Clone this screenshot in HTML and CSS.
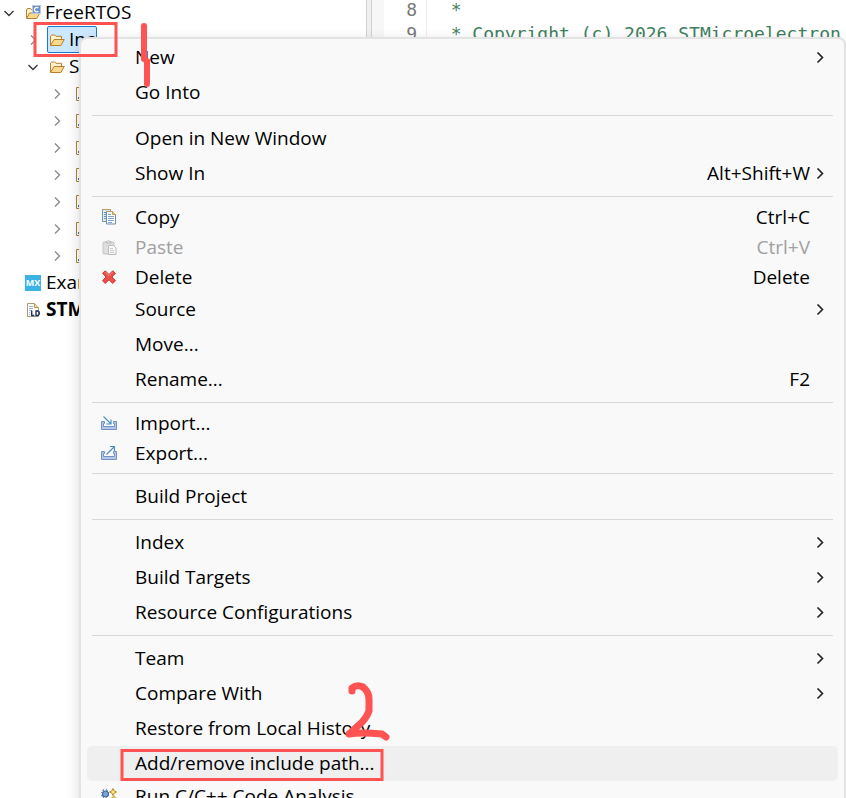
FILE: index.html
```html
<!DOCTYPE html>
<html lang="en">
<head>
<meta charset="utf-8">
<title>Project Explorer</title>
<link rel="stylesheet" href="styles.css">
</head>
<body>
<svg class="defs" aria-hidden="true">
  <symbol id="folder" viewBox="0 0 16 16">
    <path d="M1.500 13V4.200L2.800 3h3l1.200 1.300h5.500V7" fill="#fff3cf" stroke="#b9802f"/>
    <path d="M1.500 13.500 5 7.500h10.300l-3.400 6z" fill="#f9d98c" stroke="#b9802f" stroke-linejoin="round"/>
  </symbol>
  <symbol id="right" viewBox="0 0 12 12"><path d="M4 1.500 8.500 6 4 10.500" fill="none" stroke="currentColor" stroke-width="1.300"/></symbol>
  <symbol id="down" viewBox="0 0 12 12"><path d="M1.500 4 6 8.500 10.500 4" fill="none" stroke="currentColor" stroke-width="1.300"/></symbol>
  <symbol id="file" viewBox="0 0 16 16"><path d="M1.500 1.500h9l4 4v9h-13z" fill="#fffdf5" stroke="#a9853c"/><path d="M3 12h5" stroke="#3c74b8" stroke-width="2"/></symbol>
  <symbol id="more" viewBox="0 0 12 12"><path d="M3.500.500 8.500 5.500 3.500 10.500" fill="none" stroke="#222" stroke-width="1.600"/></symbol>
</svg>

<main class="workbench">
  <nav class="explorer" aria-label="Project Explorer">
    <ul class="tree">
      <li class="row root"><svg class="twisty"><use href="#down"/></svg>
        <svg class="icon" viewBox="0 0 16 16"><path d="M1.500 13V5l1-1.500h3L7 5h5v3" fill="#fff3cf" stroke="#b9802f"/><path d="M1.500 13.500 4.500 8h10.300l-3 5.500z" fill="#f9d98c" stroke="#b9802f"/><path d="M7.500.5h8v8h-8z" fill="#6d8fc9" stroke="#b8c9e8"/><path d="M13.300 3.200a2.200 2.200 0 1 0 0 2.800" fill="none" stroke="#fff" stroke-width="1.300"/></svg>
        <span class="name">FreeRTOS</span></li>
      <li class="row folder"><svg class="twisty pale"><use href="#right"/></svg><span class="selected"><svg class="icon"><use href="#folder"/></svg><span class="name">Inc</span></span></li>
      <li class="row folder"><svg class="twisty"><use href="#down"/></svg><svg class="icon"><use href="#folder"/></svg><span class="name">Src</span></li>
      <li class="row leaf"><svg class="twisty pale"><use href="#right"/></svg><svg class="icon"><use href="#file"/></svg></li>
      <li class="row leaf"><svg class="twisty pale"><use href="#right"/></svg><svg class="icon"><use href="#file"/></svg></li>
      <li class="row leaf"><svg class="twisty pale"><use href="#right"/></svg><svg class="icon"><use href="#file"/></svg></li>
      <li class="row leaf"><svg class="twisty pale"><use href="#right"/></svg><svg class="icon"><use href="#file"/></svg></li>
      <li class="row leaf"><svg class="twisty pale"><use href="#right"/></svg><svg class="icon"><use href="#file"/></svg></li>
      <li class="row leaf"><svg class="twisty pale"><use href="#right"/></svg><svg class="icon"><use href="#file"/></svg></li>
      <li class="row leaf"><svg class="twisty pale"><use href="#right"/></svg><svg class="icon"><use href="#file"/></svg></li>
      <li class="row file"><span class="icon mx">MX</span><span class="name">Example</span></li>
      <li class="row file"><svg class="icon" viewBox="0 0 16 16"><path d="M2.500 1.500h7l4 4v9h-11z" fill="#fffdf5" stroke="#a99b77"/><path d="M9.500 1.500v4h4" fill="#f2d999" stroke="#b9964c"/><path d="M4 4.500h4M4 6.500h4M4 8.500h3M4 10.500h1M4 12.500h1" stroke="#9db6dc"/><path d="M6.700 8.500v5h2.600M11 9v4.500h1.300q2-.2 2-2.300T12.300 9z" fill="none" stroke="#1f3567" stroke-width="1.400"/></svg><span class="name strong">STM32F</span></li>
    </ul>
  </nav>
  <div class="sash"></div>
  <section class="editor" aria-label="Editor">
    <div class="ruler"></div>
    <div class="numbers"><div>8</div><div>9</div></div>
    <pre class="code">  *
  * Copyright (c) 2026 STMicroelectron</pre>
  </section>
</main>

<div class="menu" role="menu">
  <button class="item" role="menuitem"><span class="glyph"></span><span class="label">New</span><svg class="more"><use href="#more"/></svg></button>
  <button class="item" role="menuitem"><span class="glyph"></span><span class="label">Go Into</span></button>
  <hr>
  <button class="item" role="menuitem"><span class="glyph"></span><span class="label">Open in New Window</span></button>
  <button class="item" role="menuitem"><span class="glyph"></span><span class="label">Show In</span><span class="keys">Alt+Shift+W</span><svg class="more"><use href="#more"/></svg></button>
  <hr>
  <button class="item compact" role="menuitem"><svg class="glyph" viewBox="0 0 16 16"><path d="M1.500.500h8v12h-8z" fill="#dfeaf4" stroke="#7396b5"/><path d="M1.500.500h8" stroke="#b99a5c"/><path d="M3 3.500h2M3 5.500h2M3 7.500h2M3 9.500h2" stroke="#6b93bd"/><path d="M5.500 2.500h6l3 3v9.500h-9z" fill="#fff" stroke="#6f8caa"/><path d="M5.500 2.500h6l3 3" fill="none" stroke="#b99a5c"/><path d="M11.500 2.500v3h3" fill="#ead4a0" stroke="#b99a5c"/><path d="M7 5.500h3M7 7.500h6M7 9.500h6M7 11.500h6M7 13.500h4" stroke="#7fa3ca"/></svg><span class="label">Copy</span><span class="keys">Ctrl+C</span></button>
  <button class="item compact" role="menuitem" disabled><svg class="glyph" viewBox="0 0 16 16"><rect x="2" y="3" width="11" height="12" rx="1" fill="#dedede" stroke="#c4c4c4"/><path d="M5 4V2.500h1.500Q7.500 0 8.500 2.500H10V4z" fill="#eee" stroke="#b8b8b8"/><path d="M7.500 6.500h5l2.500 2.500v6.500H7.500z" fill="#f8f8f8" stroke="#bdbdbd"/><path d="M9 9.500h3M9 11.500h4M9 13.500h4" stroke="#ccc"/></svg><span class="label">Paste</span><span class="keys">Ctrl+V</span></button>
  <button class="item compact" role="menuitem"><svg class="glyph" viewBox="0 0 16 16"><path d="M4.300 1.800 8 5.500l3.700-3.700 2.800 2.500L11 8l3.500 3.700-2.800 2.800L8 10.800l-3.700 3.700-2.800-2.800L5 8 1.500 4.300z" fill="#ec5149" stroke="#cf3a3c" stroke-linejoin="round"/><path d="M4.300 3 8 6.700 11.700 3" fill="none" stroke="#f58c83"/></svg><span class="label">Delete</span><span class="keys">Delete</span></button>
  <button class="item" role="menuitem"><span class="glyph"></span><span class="label">Source</span><svg class="more"><use href="#more"/></svg></button>
  <button class="item" role="menuitem"><span class="glyph"></span><span class="label">Move...</span></button>
  <button class="item" role="menuitem"><span class="glyph"></span><span class="label">Rename...</span><span class="keys">F2</span></button>
  <hr>
  <button class="item compact" role="menuitem"><svg class="glyph" viewBox="0 0 16 16"><path d="M.5 6.500h3v2h-1v3h11v-3h-1v-2h3v8H.5z" fill="#b5c7e4" stroke="#7391c4"/><path d="m2.500 1.500 7 7M10 4.500V9H5.500" fill="none" stroke="#4e91bd" stroke-width="1.200"/></svg><span class="label">Import...</span></button>
  <button class="item compact" role="menuitem"><svg class="glyph" viewBox="0 0 16 16"><path d="M.5 6.500h3v2h-1v3h11v-3h-1v-2h3v8H.5z" fill="#b5c7e4" stroke="#7391c4"/><path d="m5.500 9.500 7.500-7.500M9 1.500h4.500V6" fill="none" stroke="#4e91bd" stroke-width="1.200"/></svg><span class="label">Export...</span></button>
  <hr>
  <button class="item" role="menuitem"><span class="glyph"></span><span class="label">Build Project</span></button>
  <hr>
  <button class="item" role="menuitem"><span class="glyph"></span><span class="label">Index</span><svg class="more"><use href="#more"/></svg></button>
  <button class="item" role="menuitem"><span class="glyph"></span><span class="label">Build Targets</span><svg class="more"><use href="#more"/></svg></button>
  <button class="item" role="menuitem"><span class="glyph"></span><span class="label">Resource Configurations</span><svg class="more"><use href="#more"/></svg></button>
  <hr>
  <button class="item" role="menuitem"><span class="glyph"></span><span class="label">Team</span><svg class="more"><use href="#more"/></svg></button>
  <button class="item" role="menuitem"><span class="glyph"></span><span class="label">Compare With</span><svg class="more"><use href="#more"/></svg></button>
  <button class="item" role="menuitem"><span class="glyph"></span><span class="label">Restore from Local History</span></button>
  <button class="item active" role="menuitem"><span class="glyph"></span><span class="label">Add/remove include path...</span></button>
  <button class="item compact" role="menuitem"><svg class="glyph" viewBox="0 0 16 16"><path d="M0 4.500h8M0 7.500h8M2.500 1v9M5.500 1v9M1 2l6 7M7 2 1 9" stroke="#7d9cc8"/><circle cx="4.500" cy="6" r="3" fill="#7ba5d8" stroke="#315b95"/><path d="m12 .5 1.200 2.300 2.300 1.200-2.300 1.200L12 7.500l-1.200-2.300L8.500 4l2.300-1.200z" fill="#ffe27c" stroke="#b58a2b"/><path d="m4 10 4 4 6-6" fill="none" stroke="#d9b56c" stroke-width="3"/></svg><span class="label">Run C/C++ Code Analysis</span></button>
</div>

<svg class="marks" width="846" height="798" fill="none" stroke="#ff5252" aria-hidden="true">
  <path d="M35 23.500h81v32H35z" stroke-width="3"/>
  <path d="M144 26v33l3 2v23" stroke-width="6" stroke-linecap="round"/>
  <path d="M122 750.500h260v29H122z" stroke-width="3"/>
  <path d="M352 691v-3q5-4 11-1 6 5 6 12v12q-3 8-10 14l-9 8" stroke-width="7" stroke-linecap="round" stroke-linejoin="round"/>
  <path d="M349 734q12-2 33 0l4 3" stroke-width="7" stroke-linecap="round" stroke-linejoin="round"/>
</svg>
</body>
</html>
```
FILE: styles.css
```css
* { box-sizing: border-box; }

body {
  margin: 0;
  height: 100vh;
  overflow: hidden;
  background: #fff;
  color: #000;
  font: 19px/27px "Open Sans", sans-serif;
}

.defs { display: none; }

.workbench { display: flex; height: 100%; }

.explorer {
  flex: 0 0 366px;
  overflow: hidden;
}

.tree {
  margin: -1px 0 0;
  padding: 0;
  list-style: none;
}

.row {
  display: flex;
  align-items: center;
  height: 27px;
  gap: 4px;
}
.root { padding-left: 3px; gap: 10px; }
.root .name { margin-left: -6px; }
.folder { padding-left: 27px; gap: 10px; }
.folder > .name { margin-left: -6px; }
.leaf { padding-left: 51px; gap: 12px; }
.file { padding-left: 25px; gap: 5px; }

.twisty { flex: none; width: 12px; height: 12px; color: #333; }
.pale { color: #888; }
.icon { flex: none; width: 16px; height: 16px; }

.selected {
  display: flex;
  align-items: center;
  gap: 4px;
  height: 27px;
  margin-left: -2px;
  padding: 0 1px;
  border: 1px solid #1a7ad4;
  border-radius: 2px;
  background: #cce8ff;
}

.strong { font-weight: 700; }

.mx {
  background: #3bb3e6;
  color: #fff;
  font: 700 9px/16px "Open Sans", sans-serif;
  text-align: center;
}

.sash {
  flex: 0 0 6px;
  border: solid #d0d0d0;
  border-width: 0 1px;
  background: #f0f0f0;
}

.editor {
  display: flex;
  flex: 1;
  min-width: 0;
  overflow: hidden;
  font: 18px/24px "DejaVu Sans Mono", monospace;
}
.ruler { flex: 0 0 12px; background: #f7f7f7; }
.numbers {
  flex: 0 0 43px;
  padding-right: 9px;
  border-right: 1px solid #eee;
  margin-top: -2px;
  color: #787878;
  text-align: right;
}
.code {
  margin: -2px 0 0;
  padding-left: 2px;
  color: #3f7f5f;
  font: inherit;
}

.menu {
  position: absolute;
  top: 37px;
  right: 0;
  left: 79px;
  padding: 1px 6px;
  border: 2px solid #e3e3e3;
  border-radius: 8px;
  background: #f9f9f9;
  box-shadow: 0 4px 14px rgba(0, 0, 0, 0.14);
}

.menu hr {
  height: 1px;
  margin: 5px 5px;
  border: 0;
  background: #d7d7d7;
}

.item {
  display: flex;
  align-items: center;
  width: 100%;
  height: 35px;
  padding: 0 12px 0 14px;
  border: 0;
  border-radius: 5px;
  background: none;
  color: #000;
  font: inherit;
  text-align: left;
}
.compact { height: 30px; }
.active { background: #efefef; }
.item:disabled { color: #a0a0a0; }

.glyph { flex: none; width: 16px; height: 16px; margin-right: 18px; }
.label { flex: 1; }
.keys { margin-right: 16px; }
.more { flex: none; width: 12px; height: 12px; }
.keys + .more { margin-left: -12px; }

.marks {
  position: absolute;
  top: 0;
  left: 0;
  pointer-events: none;
}
```
